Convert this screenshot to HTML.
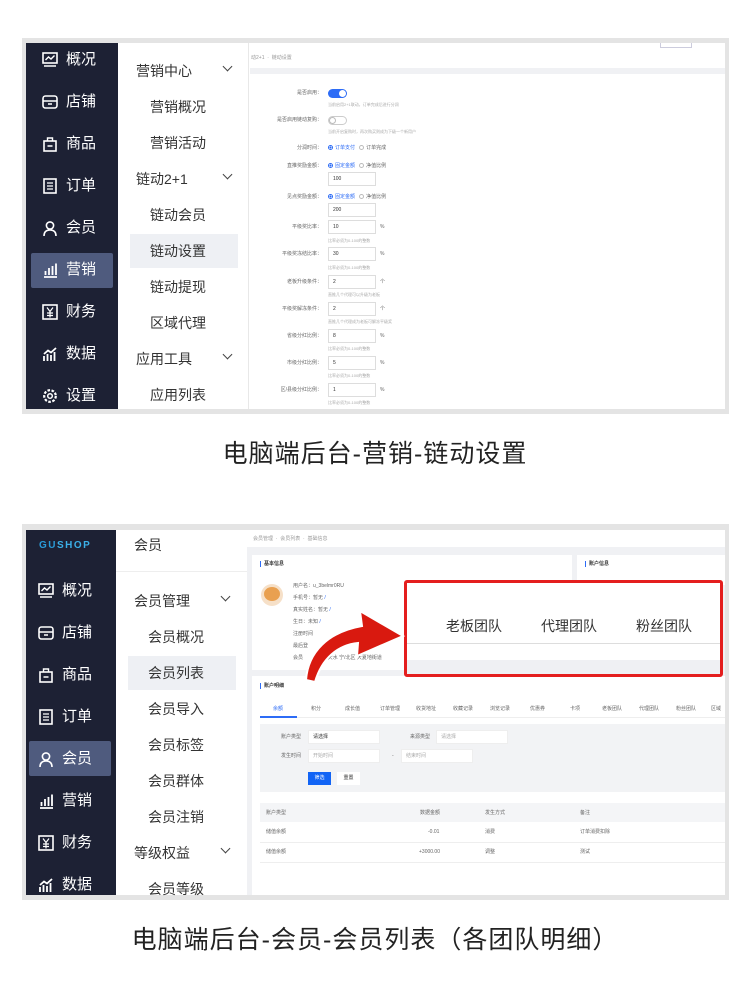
<!DOCTYPE html><html><head><meta charset="utf-8"><style>
*{margin:0;padding:0;box-sizing:border-box}
body{width:750px;height:1002px;background:#fff;position:relative;overflow:hidden;font-family:"Liberation Sans","Noto Sans CJK SC",sans-serif;color:#333}
.a{position:absolute}
.frame{position:absolute;background:#e4e4e4}
.side{background:#1d2134}
.si{position:absolute;color:#fff;font-size:15px;line-height:16px}
.si svg{position:absolute;left:-24px;top:0px}
.sub{position:absolute;font-size:14px;color:#333;line-height:16px}
.t{position:absolute;font-size:5px;color:#666;white-space:nowrap;line-height:6px}
.h{position:absolute;font-size:4px;color:#aaa;white-space:nowrap}
.inp{position:absolute;border:1px solid #ddd;background:#fff;font-size:5px;padding-left:4px;line-height:12px;height:14px;width:48px;color:#333}
.cap{position:absolute;left:0;width:750px;text-align:center;font-size:25px;letter-spacing:1px;color:#222}
.chev{position:absolute;width:7px;height:7px;border-right:1.3px solid #444;border-bottom:1.3px solid #444;transform:rotate(45deg)}
.rad{display:inline-block;width:5px;height:5px;border-radius:50%;border:1px solid #bbb;vertical-align:middle;margin-right:2px}
.rad.on{border-color:#2d6cf6;background:radial-gradient(#2d6cf6 40%,#fff 45%)}
</style></head><body>

<!-- FRAME 1 -->
<div class="frame" style="left:22px;top:38px;width:707px;height:376px"></div>
<div class="a" style="left:26px;top:43px;width:699px;height:366px;background:#fff"></div>
<div class="a side" style="left:26px;top:43px;width:92px;height:366px"></div>
<div class="a" style="left:31px;top:253px;width:82px;height:35px;background:#4f5b7e;border-radius:2px"></div>
<div class="a" style="left:130px;top:234px;width:108px;height:34px;background:#eef0f4"></div>
<div class="a" style="left:248px;top:43px;width:1px;height:366px;background:#e8e8e8"></div>
<div class="a" style="left:250px;top:68px;width:475px;height:6px;background:#f0f1f4"></div>

<div class="si" style="left:66px;top:52px"><svg width="16" height="16"><rect x="1" y="1" width="14" height="10" fill="none" stroke="#fff" stroke-width="1.6"/><path d="M3.5 8l3-3 2.5 2 3.5-3.5M2 14h12" stroke="#fff" fill="none" stroke-width="1.4"/></svg>概况</div>
<div class="si" style="left:66px;top:94px"><svg width="16" height="16"><rect x="1" y="2" width="14" height="12" rx="2.5" fill="none" stroke="#fff" stroke-width="1.6"/><path d="M1 7h14M6 10h4" stroke="#fff" stroke-width="1.4"/></svg>店铺</div>
<div class="si" style="left:66px;top:136px"><svg width="16" height="16"><rect x="2" y="5" width="12" height="10" fill="none" stroke="#fff" stroke-width="1.6"/><path d="M5.5 5V2h5v3M5.5 10h5" stroke="#fff" fill="none" stroke-width="1.4"/></svg>商品</div>
<div class="si" style="left:66px;top:178px"><svg width="16" height="16"><rect x="2" y="1" width="12" height="14" fill="none" stroke="#fff" stroke-width="1.6"/><path d="M5 5h6M5 8h6M5 11h6" stroke="#fff" stroke-width="1.3"/></svg>订单</div>
<div class="si" style="left:66px;top:220px"><svg width="16" height="16"><circle cx="8" cy="5.5" r="3.6" fill="none" stroke="#fff" stroke-width="1.6"/><path d="M2 16c0-4.5 2.5-6 6-6s6 1.5 6 6" stroke="#fff" fill="none" stroke-width="1.6"/></svg>会员</div>
<div class="si" style="left:66px;top:262px"><svg width="16" height="16"><path d="M2 15h13M3.5 13V9M7 13V6M10.5 13V4M14 13V1.5" stroke="#fff" stroke-width="1.8"/></svg>营销</div>
<div class="si" style="left:66px;top:304px"><svg width="16" height="16"><rect x="1" y="1" width="14" height="14" fill="none" stroke="#fff" stroke-width="1.6"/><path d="M5 3.5l3 4 3-4M8 7.5v6M5 9h6M5 11.5h6" stroke="#fff" fill="none" stroke-width="1.2"/></svg>财务</div>
<div class="si" style="left:66px;top:346px"><svg width="16" height="16"><path d="M2 15V10M5.5 15V8M9 15V9M12.5 15V6M2 8l4-3.5 3 2 5-4.5" stroke="#fff" fill="none" stroke-width="1.8"/></svg>数据</div>
<div class="si" style="left:66px;top:388px"><svg width="16" height="16"><circle cx="8" cy="8" r="5.8" fill="none" stroke="#fff" stroke-width="2.2" stroke-dasharray="2.6 1.5"/><circle cx="8" cy="8" r="2.3" fill="none" stroke="#fff" stroke-width="1.5"/></svg>设置</div>

<div class="sub" style="left:136px;top:63px">营销中心</div><div class="chev" style="left:224px;top:63px"></div>
<div class="sub" style="left:150px;top:99px">营销概况</div>
<div class="sub" style="left:150px;top:135px">营销活动</div>
<div class="sub" style="left:136px;top:171px">链动2+1</div><div class="chev" style="left:224px;top:171px"></div>
<div class="sub" style="left:150px;top:207px">链动会员</div>
<div class="sub" style="left:150px;top:243px">链动设置</div>
<div class="sub" style="left:150px;top:279px">链动提现</div>
<div class="sub" style="left:150px;top:315px">区域代理</div>
<div class="sub" style="left:136px;top:351px">应用工具</div><div class="chev" style="left:224px;top:351px"></div>
<div class="sub" style="left:150px;top:387px">应用列表</div>

<div class="t" style="left:251px;top:55px;color:#999">动2+1 &nbsp;·&nbsp; 链动设置</div>
<div class="a" style="left:660px;top:43px;width:32px;height:5px;border:1px solid #ccd;border-top:none"></div>

<div class="t" style="left:250px;top:90px;width:72px;text-align:right">是否启用：</div>
<div class="a" style="left:328px;top:89px;width:19px;height:9px;border-radius:5px;background:#2d6cf6"><div class="a" style="right:1px;top:1px;width:7px;height:7px;border-radius:50%;background:#fff"></div></div>
<div class="h" style="left:328px;top:102px">当前启用2+1联动，订单完成后进行分润</div>
<div class="t" style="left:250px;top:117px;width:72px;text-align:right">是否启用链动复购：</div>
<div class="a" style="left:328px;top:116px;width:19px;height:9px;border-radius:5px;border:1px solid #ccc"><div class="a" style="left:0;top:0;width:7px;height:7px;border-radius:50%;border:1px solid #bbb"></div></div>
<div class="h" style="left:328px;top:129px">当前开启复购时，再次购买则成为下级一个新用户</div>
<div class="t" style="left:250px;top:145px;width:72px;text-align:right">分润时间：</div>
<div class="t" style="left:328px;top:145px;color:#2d6cf6"><span class="rad on"></span>订单支付 &nbsp; <span style="color:#666"><span class="rad"></span>订单完成</span></div>
<div class="t" style="left:250px;top:163px;width:72px;text-align:right">直推奖励金额：</div>
<div class="t" style="left:328px;top:163px;color:#2d6cf6"><span class="rad on"></span>固定金额 &nbsp; <span style="color:#666"><span class="rad"></span>净值比例</span></div>
<div class="inp" style="left:328px;top:172px">100</div>
<div class="t" style="left:250px;top:194px;width:72px;text-align:right">见点奖励金额：</div>
<div class="t" style="left:328px;top:194px;color:#2d6cf6"><span class="rad on"></span>固定金额 &nbsp; <span style="color:#666"><span class="rad"></span>净值比例</span></div>
<div class="inp" style="left:328px;top:203px">200</div>

<div class="t" style="left:250px;top:224px;width:72px;text-align:right">平级奖比率：</div><div class="inp" style="left:328px;top:220px">10</div><div class="t" style="left:380px;top:224px">%</div><div class="h" style="left:328px;top:238px">比率必须为0-100的整数</div>
<div class="t" style="left:250px;top:251px;width:72px;text-align:right">平级奖冻结比率：</div><div class="inp" style="left:328px;top:247px">30</div><div class="t" style="left:380px;top:251px">%</div><div class="h" style="left:328px;top:265px">比率必须为0-100的整数</div>
<div class="t" style="left:250px;top:279px;width:72px;text-align:right">老板升级条件：</div><div class="inp" style="left:328px;top:275px">2</div><div class="t" style="left:380px;top:279px">个</div><div class="h" style="left:328px;top:292px">直推几个代理可以升级为老板</div>
<div class="t" style="left:250px;top:306px;width:72px;text-align:right">平级奖解冻条件：</div><div class="inp" style="left:328px;top:302px">2</div><div class="t" style="left:380px;top:306px">个</div><div class="h" style="left:328px;top:319px">直推几个代理成为老板可解冻平级奖</div>
<div class="t" style="left:250px;top:333px;width:72px;text-align:right">省级分红比例：</div><div class="inp" style="left:328px;top:329px">8</div><div class="t" style="left:380px;top:333px">%</div><div class="h" style="left:328px;top:346px">比率必须为0-100的整数</div>
<div class="t" style="left:250px;top:360px;width:72px;text-align:right">市级分红比例：</div><div class="inp" style="left:328px;top:356px">5</div><div class="t" style="left:380px;top:360px">%</div><div class="h" style="left:328px;top:373px">比率必须为0-100的整数</div>
<div class="t" style="left:250px;top:387px;width:72px;text-align:right">区/县级分红比例：</div><div class="inp" style="left:328px;top:383px">1</div><div class="t" style="left:380px;top:387px">%</div><div class="h" style="left:328px;top:400px">比率必须为0-100的整数</div>

<div class="cap" style="top:434px">电脑端后台-营销-链动设置</div>

<!-- FRAME 2 -->
<div class="frame" style="left:22px;top:524px;width:707px;height:376px"></div>
<div class="a" style="left:26px;top:530px;width:699px;height:365px;background:#f0f1f4"></div>
<div class="a side" style="left:26px;top:530px;width:90px;height:365px"></div>
<div class="a" style="left:116px;top:530px;width:131px;height:365px;background:#fff"></div>
<div class="a" style="left:116px;top:571px;width:131px;height:1px;background:#eee"></div>
<div class="a" style="left:247px;top:530px;width:478px;height:17px;background:#fff"></div>
<div class="a" style="left:29px;top:741px;width:82px;height:35px;background:#4f5b7e;border-radius:2px"></div>
<div class="a" style="left:128px;top:656px;width:108px;height:34px;background:#eef0f4"></div>
<div class="a" style="left:39px;top:540px;font-size:10px;font-weight:bold;letter-spacing:1.5px;color:#2a9bd8">GU<span style="color:#3bb0e8">SHOP</span></div>

<div class="si" style="left:62px;top:583px"><svg width="16" height="16"><rect x="1" y="1" width="14" height="10" fill="none" stroke="#fff" stroke-width="1.6"/><path d="M3.5 8l3-3 2.5 2 3.5-3.5M2 14h12" stroke="#fff" fill="none" stroke-width="1.4"/></svg>概况</div>
<div class="si" style="left:62px;top:625px"><svg width="16" height="16"><rect x="1" y="2" width="14" height="12" rx="2.5" fill="none" stroke="#fff" stroke-width="1.6"/><path d="M1 7h14M6 10h4" stroke="#fff" stroke-width="1.4"/></svg>店铺</div>
<div class="si" style="left:62px;top:667px"><svg width="16" height="16"><rect x="2" y="5" width="12" height="10" fill="none" stroke="#fff" stroke-width="1.6"/><path d="M5.5 5V2h5v3M5.5 10h5" stroke="#fff" fill="none" stroke-width="1.4"/></svg>商品</div>
<div class="si" style="left:62px;top:709px"><svg width="16" height="16"><rect x="2" y="1" width="12" height="14" fill="none" stroke="#fff" stroke-width="1.6"/><path d="M5 5h6M5 8h6M5 11h6" stroke="#fff" stroke-width="1.3"/></svg>订单</div>
<div class="si" style="left:62px;top:751px"><svg width="16" height="16"><circle cx="8" cy="5.5" r="3.6" fill="none" stroke="#fff" stroke-width="1.6"/><path d="M2 16c0-4.5 2.5-6 6-6s6 1.5 6 6" stroke="#fff" fill="none" stroke-width="1.6"/></svg>会员</div>
<div class="si" style="left:62px;top:793px"><svg width="16" height="16"><path d="M2 15h13M3.5 13V9M7 13V6M10.5 13V4M14 13V1.5" stroke="#fff" stroke-width="1.8"/></svg>营销</div>
<div class="si" style="left:62px;top:835px"><svg width="16" height="16"><rect x="1" y="1" width="14" height="14" fill="none" stroke="#fff" stroke-width="1.6"/><path d="M5 3.5l3 4 3-4M8 7.5v6M5 9h6M5 11.5h6" stroke="#fff" fill="none" stroke-width="1.2"/></svg>财务</div>
<div class="si" style="left:62px;top:877px"><svg width="16" height="16"><path d="M2 15V10M5.5 15V8M9 15V9M12.5 15V6M2 8l4-3.5 3 2 5-4.5" stroke="#fff" fill="none" stroke-width="1.8"/></svg>数据</div>

<div class="sub" style="left:134px;top:537px">会员</div>
<div class="sub" style="left:134px;top:593px">会员管理</div><div class="chev" style="left:222px;top:593px"></div>
<div class="sub" style="left:148px;top:629px">会员概况</div>
<div class="sub" style="left:148px;top:665px">会员列表</div>
<div class="sub" style="left:148px;top:701px">会员导入</div>
<div class="sub" style="left:148px;top:737px">会员标签</div>
<div class="sub" style="left:148px;top:773px">会员群体</div>
<div class="sub" style="left:148px;top:809px">会员注销</div>
<div class="sub" style="left:134px;top:845px">等级权益</div><div class="chev" style="left:222px;top:845px"></div>
<div class="sub" style="left:148px;top:881px">会员等级</div>

<div class="t" style="left:253px;top:536px;color:#999">会员管理 &nbsp;·&nbsp; 会员列表 &nbsp;·&nbsp; 基础信息</div>
<div class="a" style="left:252px;top:555px;width:320px;height:115px;background:#fff"></div>
<div class="a" style="left:577px;top:555px;width:148px;height:30px;background:#fff"></div>
<div class="t" style="left:260px;top:561px;color:#333;font-weight:bold;border-left:1px solid #2d6cf6;padding-left:3px">基本信息</div>
<div class="t" style="left:585px;top:561px;color:#333;font-weight:bold;border-left:1px solid #2d6cf6;padding-left:3px">账户信息</div>
<div class="a" style="left:261px;top:584px;width:22px;height:22px;border-radius:50%;background:#f6e0c8"><div class="a" style="left:3px;top:3px;width:16px;height:14px;border-radius:50%;background:#e9a050"></div></div>
<div class="t" style="left:293px;top:583px">用户名：u_3belmr0RU</div>
<div class="t" style="left:293px;top:595px">手机号：暂无 <span style="color:#2d6cf6">/</span></div>
<div class="t" style="left:293px;top:607px">真实姓名：暂无 <span style="color:#2d6cf6">/</span></div>
<div class="t" style="left:293px;top:619px">生日：未知 <span style="color:#2d6cf6">/</span></div>
<div class="t" style="left:293px;top:631px">注册时间</div>
<div class="t" style="left:293px;top:643px">最后登</div>
<div class="t" style="left:293px;top:655px">会员 &nbsp; &nbsp; &nbsp; 湖南省天水 宁/北区 大夏地街道</div>

<div class="a" style="left:252px;top:676px;width:473px;height:219px;background:#fff"></div>
<div class="t" style="left:260px;top:683px;color:#333;font-weight:bold;border-left:1px solid #2d6cf6;padding-left:3px">账户明细</div>
<div class="a" style="left:260px;top:717px;width:465px;height:1px;background:#eee"></div>
<div class="a" style="left:260px;top:716px;width:37px;height:2px;background:#2d6cf6"></div>
<div class="t" style="left:273px;top:706px;color:#2d6cf6">余额</div>
<div class="t" style="left:311px;top:706px">积分</div><div class="t" style="left:345px;top:706px">成长值</div><div class="t" style="left:380px;top:706px">订单管理</div><div class="t" style="left:416px;top:706px">收货地址</div><div class="t" style="left:453px;top:706px">收藏记录</div><div class="t" style="left:490px;top:706px">浏览记录</div><div class="t" style="left:530px;top:706px">优惠券</div><div class="t" style="left:570px;top:706px">卡项</div><div class="t" style="left:602px;top:706px">老板团队</div><div class="t" style="left:639px;top:706px">代理团队</div><div class="t" style="left:676px;top:706px">粉丝团队</div><div class="t" style="left:711px;top:706px">区域</div>
<div class="a" style="left:260px;top:724px;width:465px;height:68px;background:#f2f3f5"></div>
<div class="t" style="left:281px;top:734px">账户类型</div><div class="inp" style="left:308px;top:730px;width:72px;border-color:#eee">请选择</div>
<div class="t" style="left:410px;top:734px">来源类型</div><div class="inp" style="left:436px;top:730px;width:72px;border-color:#eee;color:#aaa">请选择</div>
<div class="t" style="left:281px;top:753px">发生时间</div><div class="inp" style="left:308px;top:749px;width:72px;border-color:#eee;color:#aaa">开始时间</div>
<div class="t" style="left:392px;top:753px">-</div><div class="inp" style="left:401px;top:749px;width:72px;border-color:#eee;color:#aaa">结束时间</div>
<div class="a" style="left:308px;top:772px;width:23px;height:13px;background:#1264f5;color:#fff;font-size:5px;text-align:center;line-height:13px">筛选</div>
<div class="a" style="left:337px;top:772px;width:23px;height:13px;background:#fff;font-size:5px;text-align:center;line-height:13px">重置</div>
<div class="a" style="left:260px;top:803px;width:465px;height:19px;background:#f4f5f7"></div>
<div class="t" style="left:266px;top:810px">账户类型</div><div class="t" style="left:420px;top:810px">数据金额</div><div class="t" style="left:485px;top:810px">发生方式</div><div class="t" style="left:580px;top:810px">备注</div>
<div class="t" style="left:266px;top:829px">储值余额</div><div class="t" style="left:428px;top:829px">-0.01</div><div class="t" style="left:485px;top:829px">消费</div><div class="t" style="left:580px;top:829px">订单消费扣除</div>
<div class="a" style="left:260px;top:842px;width:465px;height:1px;background:#eee"></div>
<div class="t" style="left:266px;top:849px">储值余额</div><div class="t" style="left:419px;top:849px">+3000.00</div><div class="t" style="left:485px;top:849px">调整</div><div class="t" style="left:580px;top:849px">测试</div>
<div class="a" style="left:260px;top:862px;width:465px;height:1px;background:#eee"></div>

<!-- red box -->
<div class="a" style="left:404px;top:580px;width:319px;height:97px;border:3px solid #e41e1e;border-radius:3px;background:#fff;overflow:hidden">
 <div class="a" style="left:0;right:0;top:77px;bottom:0;background:#eff0f3"></div>
 <div class="a" style="left:0;right:0;top:60px;height:1px;background:#ddd"></div>
 <div class="a" style="left:39px;top:33px;font-size:14px;color:#333">老板团队</div>
 <div class="a" style="left:134px;top:33px;font-size:14px;color:#333">代理团队</div>
 <div class="a" style="left:229px;top:33px;font-size:14px;color:#333">粉丝团队</div>
</div>
<svg class="a" style="left:300px;top:600px" width="110" height="90"><path d="M6 80 C8 52 28 32 62 26 L60 11 L103 36 L57 56 L58 43 C38 45 22 58 15 82 Z" fill="#d9190f" stroke="#fff" stroke-width="2"/></svg>

<div class="cap" style="top:434px;display:none"></div>
<div class="cap" style="top:920px">电脑端后台-会员-会员列表（各团队明细）</div>
</body></html>
